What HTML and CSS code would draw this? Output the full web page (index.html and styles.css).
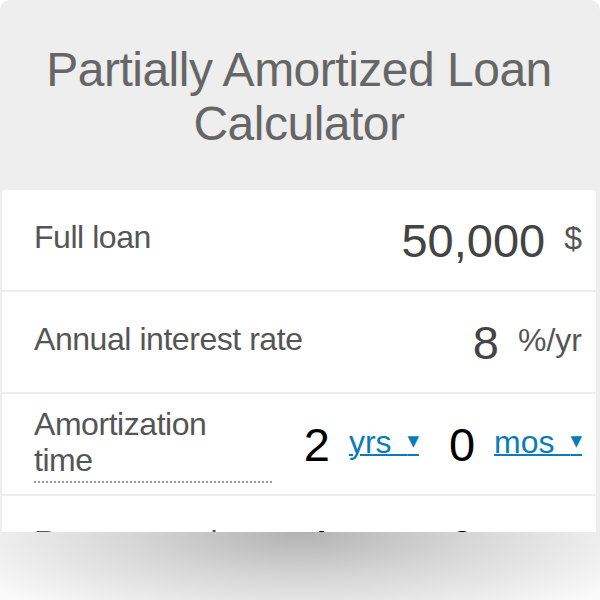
FILE: index.html
```html
<!DOCTYPE html>
<html lang="en">
<head>
    <meta charset="UTF-8">
    <meta name="viewport" content="width=device-width, initial-scale=1.0">
    <title>Partially Amortized Loan Calculator</title>
    <link rel="stylesheet" href="styles.css">
</head>
<body>
    <div class="calc">
        <h1 class="calc-title">Partially Amortized Loan Calculator</h1>

        <div class="row">
            <span class="label">Full loan</span>
            <div class="field">
                <span class="value">50,000</span>
                <span class="unit">$</span>
            </div>
        </div>

        <div class="row">
            <span class="label">Annual interest rate</span>
            <div class="field">
                <span class="value">8</span>
                <span class="unit">%/yr</span>
            </div>
        </div>

        <div class="row">
            <span class="label label-tip">Amortization time</span>
            <div class="field">
                <span class="value value-time">2</span>
                <span class="unit unit-link">yrs <span class="caret">▼</span></span>
                <span class="value value-time value-second">0</span>
                <span class="unit unit-link">mos <span class="caret">▼</span></span>
            </div>
        </div>

        <div class="row">
            <span class="label label-low">Repayment time</span>
            <div class="field">
                <span class="value value-time">4</span>
                <span class="unit unit-link">yrs <span class="caret">▼</span></span>
                <span class="value value-time value-second">0</span>
                <span class="unit unit-link">mos <span class="caret">▼</span></span>
            </div>
        </div>
    </div>
    <div class="fade"></div>
</body>
</html>
```

FILE: styles.css
```css
body {
    margin: 0;
    background-color: #fff;
    font-family: "Liberation Sans", Arial, sans-serif;
    overflow: hidden;
}

.calc {
    height: 532px;
    overflow: hidden;
    background-color: #eeeeee;
    border-radius: 10px 10px 0 0;
    padding: 0 4px 0 2px;
}

.calc-title {
    margin: 0;
    height: 190px;
    box-sizing: border-box;
    padding-top: 43px;
    text-align: center;
    font-size: 48px;
    line-height: 54px;
    font-weight: normal;
    letter-spacing: -0.5px;
    color: #666;
}

.row {
    display: flex;
    align-items: center;
    justify-content: space-between;
    height: 100px;
    margin-bottom: 2px;
    padding: 0 14px 0 32px;
    background-color: #fff;
}

.row:first-of-type {
    border-radius: 4px 4px 0 0;
}

.label {
    margin-bottom: 5px;
    font-size: 32px;
    letter-spacing: -0.45px;
    color: #555;
}

.label-low {
    margin-bottom: 7px;
}

/* label with a dotted hint line under it */
.label-tip {
    width: 238px;
    box-sizing: border-box;
    margin-bottom: 0;
    padding: 0 20px 3px 0;
    line-height: 36px;
    border-bottom: 2px dotted #9a9a9a;
}

.field {
    display: flex;
    align-items: center;
}

.value {
    font-size: 47px;
    color: #444;
}

.value-time {
    color: #000;
}

.value-second {
    margin-left: 30px;
}

.unit {
    margin-bottom: 4px;
    margin-left: 19px;
    font-size: 32px;
    color: #555;
}

.unit-link {
    margin-left: 19px;
    color: #0b7cba;
    text-decoration: underline;
    text-decoration-thickness: 2px;
    word-spacing: 7px;
}

.caret {
    font-family: "DejaVu Sans", sans-serif;
    font-size: 15px;
    vertical-align: 7px;
}

.fade {
    height: 68px;
    background: radial-gradient(ellipse 62% 150% at 50% 0, #b2b2b2 0%, #d6d6d6 45%, #fafafa 100%);
}
```
